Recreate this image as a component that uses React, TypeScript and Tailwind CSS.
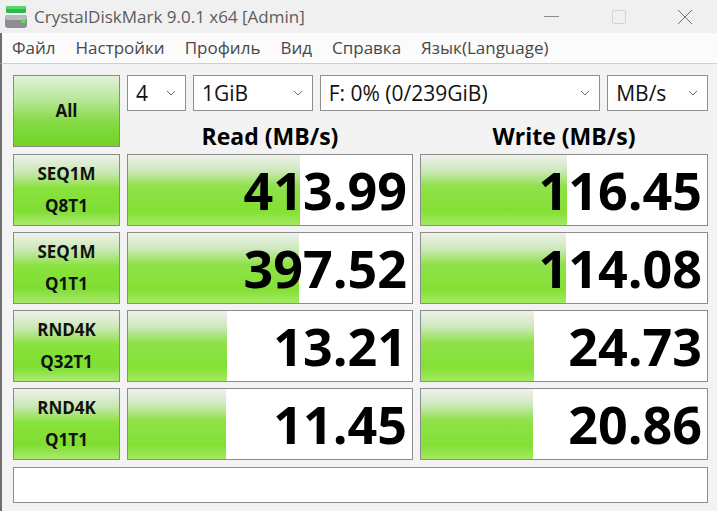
import React from "react";

const ROWS = [
  { l1: "SEQ1M", l2: "Q8T1", read: "413.99", readW: 172, write: "116.45", writeW: 146 },
  { l1: "SEQ1M", l2: "Q1T1", read: "397.52", readW: 171, write: "114.08", writeW: 145 },
  { l1: "RND4K", l2: "Q32T1", read: "13.21", readW: 99, write: "24.73", writeW: 113 },
  { l1: "RND4K", l2: "Q1T1", read: "11.45", readW: 98, write: "20.86", writeW: 112 },
];

const MENU = ["Файл", "Настройки", "Профиль", "Вид", "Справка", "Язык(Language)"];

function Chevron() {
  return (
    <svg width="10" height="6" viewBox="0 0 10 6" className="shrink-0">
      <path d="M1 1 L5 5 L9 1" fill="none" stroke="#6b6b6b" strokeWidth="1" />
    </svg>
  );
}

function Combo({ text, w }: { text: string; w: string }) {
  return (
    <div className={`${w} h-full flex items-center justify-between bg-white border border-[#8f8f8f] pl-[8px] pr-[9px]`}>
      <span className="text-[21px] leading-none text-[#111]">{text}</span>
      <Chevron />
    </div>
  );
}

function AppIcon() {
  return (
    <svg width="24" height="24" viewBox="0 0 24 24">
      <rect x="2" y="1" width="20" height="7" rx="1.5" fill="#2fb84a" />
      <rect x="2" y="1" width="20" height="3" rx="1.5" fill="#58d66a" />
      <rect x="1" y="10" width="22" height="13" rx="3" fill="#8b8f93" />
      <rect x="1" y="10" width="22" height="5" rx="3" fill="#b7bbbf" />
      <rect x="17" y="15" width="4" height="3" fill="#5ce04a" />
    </svg>
  );
}

function ResultBox({ value, barW }: { value: string; barW: number }) {
  return (
    <div className="relative h-full bg-white border border-[#8c8c8c] overflow-hidden">
      <div
        className="absolute left-0 top-0 bottom-0 bg-[linear-gradient(to_bottom,#eef1ec_0%,#cfe8bd_22%,#8fe14a_45%,#84e034_80%,#a3ea62_100%)]"
        style={{ width: barW }}
      />
      <div className="relative h-full flex items-center justify-end pr-[5px]">
        <span className="font-['Open_Sans',sans-serif] font-bold text-[52px] leading-none text-black">
          {value}
        </span>
      </div>
    </div>
  );
}

export default function App() {
  return (
    <div className="w-[717px] h-[511px] bg-[#f3f3f3] font-['Open_Sans',sans-serif] overflow-hidden flex flex-col">
      {/* title bar */}
      <div className="h-[33px] flex items-center bg-[#f0f0f0]">
        <div className="pl-[4px] pr-[6px] flex items-center">
          <AppIcon />
        </div>
        <span className="text-[17px] text-[#5c5c5c]">CrystalDiskMark 9.0.1 x64 [Admin]</span>
        <div className="ml-auto flex items-center h-full">
          <div className="w-[68px] h-full flex items-center justify-center">
            <div className="w-[15px] h-px bg-[#8a8a8a]" />
          </div>
          <div className="w-[68px] h-full flex items-center justify-center">
            <div className="w-[14px] h-[14px] border border-[#d4d4d4] rounded-[2px]" />
          </div>
          <div className="w-[64px] h-full flex items-center justify-center">
            <svg width="16" height="16" viewBox="0 0 16 16">
              <path d="M1 1 L15 15 M15 1 L1 15" stroke="#6e6e6e" strokeWidth="1" />
            </svg>
          </div>
        </div>
      </div>

      {/* menu */}
      <div className="h-[31px] bg-[#fbfbfb] border-b border-[#cfcfcf] border-l-2 border-l-[#6e6e6e] flex items-center gap-[20px] pl-[10px]">
        {MENU.map((m) => (
          <span key={m} className="text-[17px] text-[#484848]">
            {m}
          </span>
        ))}
      </div>

      {/* main */}
      <div className="flex-1 border-l-2 border-l-[#6e6e6e] pt-[11px] pl-[11px] pr-[9px]">
        <div className="flex gap-[7px] h-[72px]">
          <div className="w-[107px] h-full border border-[#8a8a8a] flex items-center justify-center bg-[linear-gradient(to_bottom,#e3f2da_0%,#b6e697_35%,#86db45_65%,#70d425_100%)]">
            <span className="font-bold text-[17px] text-[#111]">All</span>
          </div>
          <div className="w-[581px] flex flex-col">
            <div className="h-[36px] flex gap-[7px]">
              <Combo text="4" w="w-[59px]" />
              <Combo text="1GiB" w="w-[120px]" />
              <Combo text="F: 0% (0/239GiB)" w="w-[281px]" />
              <Combo text="MB/s" w="w-[101px]" />
            </div>
            <div className="flex-1 grid grid-cols-[286px_288px] gap-x-[7px] items-end">
              <div className="text-center font-bold text-[23px] leading-[22px] text-black">Read (MB/s)</div>
              <div className="text-center font-bold text-[23px] leading-[22px] text-black">Write (MB/s)</div>
            </div>
          </div>
        </div>

        <div className="mt-[7px] flex flex-col gap-[6px]">
          {ROWS.map((r, i) => (
            <div key={i} className="h-[72px] grid grid-cols-[107px_286px_288px] gap-x-[7px]">
              <div className="h-full border border-[#8a8a8a] flex flex-col items-center justify-center bg-[linear-gradient(to_bottom,#eef2eb_0%,#c8e7b2_25%,#88e23c_48%,#7fde32_80%,#ace96f_100%)]">
                <span className="font-bold text-[17px] leading-[32px] text-[#111]">{r.l1}</span>
                <span className="font-bold text-[17px] leading-[32px] text-[#111]">{r.l2}</span>
              </div>
              <ResultBox value={r.read} barW={r.readW} />
              <ResultBox value={r.write} barW={r.writeW} />
            </div>
          ))}
        </div>

        <div className="mt-[7px] h-[36px] w-[695px] bg-white border border-[#8c8c8c]" />
      </div>
    </div>
  );
}
